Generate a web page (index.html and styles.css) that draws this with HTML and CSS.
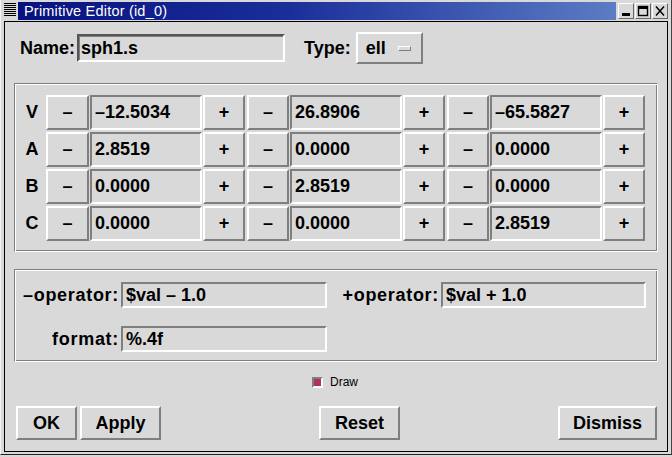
FILE: index.html
```html
<!DOCTYPE html>
<html>
<head>
<meta charset="utf-8">
<link rel="stylesheet" href="styles.css">
</head>
<body>
<div class="window">
  <div class="titlebar">
    <div class="menu-icon"><span></span><span></span><span></span><span></span><span></span><span></span><span></span></div>
    <div class="title">Primitive Editor (id_0)</div>
    <div class="controls">
      <div class="ctrl"><svg width="12" height="12" viewBox="0 0 12 12"><rect x="2" y="8" width="8" height="3" fill="#000"/></svg></div>
      <div class="ctrl"><svg width="12" height="12" viewBox="0 0 12 12"><rect x="1.5" y="1.5" width="9" height="9" fill="none" stroke="#000" stroke-width="1.4"/><rect x="1" y="1" width="10" height="3" fill="#000"/></svg></div>
      <div class="ctrl"><svg width="12" height="12" viewBox="0 0 12 12"><path d="M2 1.5 L10 10.5 M10 1.5 L2 10.5" stroke="#000" stroke-width="1.5"/></svg></div>
    </div>
  </div>
  <div class="client">
    <div class="name-row">
      <span class="lbl">Name:</span>
      <div class="entry name-entry">sph1.s</div>
      <span class="lbl type-lbl">Type:</span>
      <div class="menubtn"><span>ell</span><span class="ind"></span></div>
    </div>

    <div class="group matrix-frame">
      <div class="matrix">
        <div class="rl">V</div>
        <div class="btn">–</div><div class="entry cell">–12.5034</div><div class="btn">+</div>
        <div class="btn">–</div><div class="entry cell">26.8906</div><div class="btn">+</div>
        <div class="btn">–</div><div class="entry cell">–65.5827</div><div class="btn">+</div>

        <div class="rl">A</div>
        <div class="btn">–</div><div class="entry cell">2.8519</div><div class="btn">+</div>
        <div class="btn">–</div><div class="entry cell">0.0000</div><div class="btn">+</div>
        <div class="btn">–</div><div class="entry cell">0.0000</div><div class="btn">+</div>

        <div class="rl">B</div>
        <div class="btn">–</div><div class="entry cell">0.0000</div><div class="btn">+</div>
        <div class="btn">–</div><div class="entry cell">2.8519</div><div class="btn">+</div>
        <div class="btn">–</div><div class="entry cell">0.0000</div><div class="btn">+</div>

        <div class="rl">C</div>
        <div class="btn">–</div><div class="entry cell">0.0000</div><div class="btn">+</div>
        <div class="btn">–</div><div class="entry cell">0.0000</div><div class="btn">+</div>
        <div class="btn">–</div><div class="entry cell">2.8519</div><div class="btn">+</div>
      </div>
    </div>

    <div class="group ops-frame">
      <div class="ops">
        <span class="olbl">–operator:</span>
        <div class="entry oentry">$val – 1.0</div>
        <span class="olbl">+operator:</span>
        <div class="entry oentry">$val + 1.0</div>
        <span class="olbl">format:</span>
        <div class="entry oentry">%.4f</div>
      </div>
    </div>

    <div class="check-row">
      <span class="checkbox"></span><span class="check-text">Draw</span>
    </div>

    <div class="button-row">
      <div class="btn-group">
        <div class="btn dbtn ok">OK</div>
        <div class="btn dbtn apply">Apply</div>
      </div>
      <div class="btn dbtn reset">Reset</div>
      <div class="btn dbtn dismiss">Dismiss</div>
    </div>
  </div>
</div>
</body>
</html>
```

FILE: styles.css
```css
* { box-sizing: border-box; }

body {
  margin: 0;
  background: #d9d9d9;
  font-family: "Liberation Sans", Arial, sans-serif;
  color: #000;
}

.window {
  width: 672px;
  height: 455px;
  background: #d9d9d9;
  border-bottom: 1px solid #222;
  border-right: 1px solid #444;
  border-left: 1px solid #f4f4f4;
}

/* ---------- title bar ---------- */
.titlebar {
  height: 21px;
  display: flex;
  align-items: flex-start;
}

.menu-icon {
  width: 17px;
  height: 20px;
  display: flex;
  flex-direction: column;
  gap: 1px;
  padding: 3px 0 0 3px;
}

.menu-icon span {
  display: block;
  width: 12px;
  height: 1px;
  background: #000;
}

.title {
  flex: 1;
  height: 18px;
  margin-top: 2px;
  padding-left: 6px;
  background: linear-gradient(to right, #08127f 0%, #1a2e9a 45%, #5c7cc4 100%);
  color: #fff;
  font-size: 14.5px;
  line-height: 18px;
  letter-spacing: 0.2px;
  white-space: nowrap;
}

.controls {
  display: flex;
  gap: 1px;
  padding: 3px 3px 0 2px;
}

.ctrl {
  width: 16px;
  height: 16px;
  border: 1px solid;
  border-color: #fff #666 #666 #fff;
  display: flex;
  align-items: center;
  justify-content: center;
  background: #d9d9d9;
}

/* ---------- client area ---------- */
.client {
  margin-left: 3px;
  width: 664px;
  height: 431px;
  border: 1px solid #000;
  display: flex;
  flex-direction: column;
  padding-left: 9px;
  padding-right: 9px;
}

.lbl, .olbl, .rl {
  font-weight: bold;
  font-size: 18px;
  white-space: nowrap;
}

.entry {
  border: 2px solid;
  border-color: #7f7f7f #fff #fff #7f7f7f;
  font-weight: bold;
  font-size: 18px;
  white-space: nowrap;
  padding-left: 2px;
  display: flex;
  align-items: center;
}

.btn {
  border: 2px solid;
  border-color: #fff #7f7f7f #7f7f7f #fff;
  font-weight: bold;
  font-size: 18px;
  display: flex;
  align-items: center;
  justify-content: center;
}

/* name row */
.name-row {
  display: flex;
  align-items: center;
  height: 32px;
  margin-top: 10px;
  padding-left: 6px;
}

.name-entry {
  width: 208px;
  height: 28px;
  margin-left: 2px;
  border-color: #555 #fff #fff #555;
  box-shadow: inset 1px 1px 0 #7f7f7f;
}

.type-lbl {
  margin-left: 19px;
}

.menubtn {
  margin-left: 5px;
  width: 67px;
  height: 32px;
  border: 2px solid;
  border-color: #fff #7f7f7f #7f7f7f #fff;
  font-weight: bold;
  font-size: 18px;
  display: flex;
  align-items: center;
  padding-left: 8px;
}

.menubtn .ind {
  width: 13px;
  height: 5px;
  margin-left: 12px;
  border: 1px solid;
  border-color: #fff #7f7f7f #7f7f7f #fff;
}

/* groove frames */
.group {
  border: 1px solid;
  border-color: #7f7f7f #fff #fff #7f7f7f;
  box-shadow: inset 1px 1px 0 #fff, inset -1px -1px 0 #7f7f7f;
}

.matrix-frame {
  margin-top: 19px;
  height: 169px;
  padding: 11px 0 0 0;
}

.matrix {
  display: grid;
  grid-template-columns: 30px 43px 112px 42px 43px 112px 42px 43px 112px 42px;
  grid-auto-rows: 35px;
  row-gap: 2px;
  column-gap: 1px;
}

.matrix .btn:nth-child(10n+5),
.matrix .btn:nth-child(10n+8) {
  margin-left: 1px;
}

.rl {
  display: flex;
  align-items: center;
  justify-content: center;
  padding-left: 4px;
}

.cell {
  padding-left: 3px;
}

/* operator frame */
.ops-frame {
  margin-top: 17px;
  height: 93px;
  padding-top: 12px;
}

.ops {
  display: grid;
  grid-template-columns: 104px 206px 110px 205px;
  grid-auto-rows: 26px;
  column-gap: 2px;
  row-gap: 18px;
}

.olbl {
  display: flex;
  align-items: center;
  justify-content: flex-end;
  letter-spacing: 0.7px;
}

.oentry {
  padding-left: 3px;
}

/* checkbox */
.check-row {
  margin-top: 12px;
  height: 16px;
  display: flex;
  align-items: center;
  justify-content: center;
  gap: 7px;
  padding-right: 2px;
}

.checkbox {
  width: 11px;
  height: 11px;
  border: 2px solid;
  border-color: #7f7f7f #fff #fff #7f7f7f;
  background: #b03060;
}

.check-text {
  font-size: 12px;
}

/* bottom buttons */
.button-row {
  margin-top: 16px;
  display: flex;
  justify-content: space-between;
  padding-left: 2px;
  padding-right: 1px;
}

.btn-group {
  display: flex;
  gap: 3px;
}

.dbtn {
  height: 34px;
}

.ok { width: 61px; }
.apply { width: 81px; }
.reset { width: 81px; }
.dismiss { width: 99px; }
```
